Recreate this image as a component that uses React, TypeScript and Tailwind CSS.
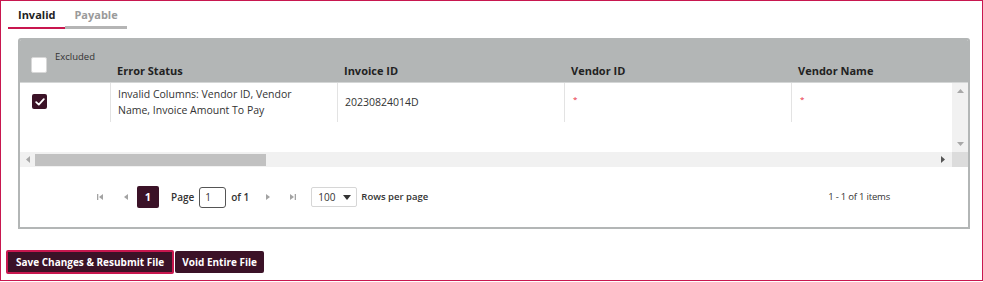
import React from "react";

const maroon = "bg-[#3b1227]";

function Tri({ dir, bar }: { dir: "l" | "r"; bar?: boolean }) {
  // small pager arrow, optionally with a bar (first/last)
  return (
    <svg width="9" height="8" viewBox="0 0 9 8" className="text-[#a3a3a3]">
      {dir === "l" ? (
        <>
          {bar && <rect x="1" y="1" width="1.3" height="6" fill="currentColor" />}
          <path d="M7 1 L3 4 L7 7 Z" fill="currentColor" />
        </>
      ) : (
        <>
          <path d="M2 1 L6 4 L2 7 Z" fill="currentColor" />
          {bar && <rect x="6.7" y="1" width="1.3" height="6" fill="currentColor" />}
        </>
      )}
    </svg>
  );
}

function Check() {
  return (
    <div className={`w-[15px] h-[15px] rounded-[2px] ${maroon} flex items-center justify-center`}>
      <svg width="10" height="8" viewBox="0 0 10 8">
        <path d="M1.2 4.2 L3.8 6.6 L8.8 1.2" stroke="white" strokeWidth="1.8" fill="none" strokeLinecap="round" strokeLinejoin="round" />
      </svg>
    </div>
  );
}

export default function App() {
  const cols = ["Error Status", "Invoice ID", "Vendor ID", "Vendor Name"];

  return (
    <div
      className="w-[983px] h-[281px] border border-[#c8174f] bg-white text-[#222] overflow-hidden"
      style={{ fontFamily: '"Open Sans", "Liberation Sans", sans-serif' }}
    >
      {/* Tabs */}
      <div className="flex ml-[7px] mt-[3px] h-[25px]">
        <div className="px-[10px] pt-[3px] border-b-2 border-[#c8174f] text-[11px] font-bold text-[#222]">Invalid</div>
        <div className="px-[9px] pt-[3px] border-b-[3px] border-[#b5b5b5] text-[11px] font-bold text-[#9a9a9a]">Payable</div>
      </div>

      {/* Grid */}
      <div className="ml-[17px] mt-[9px] w-[952px] h-[191px] border-2 border-[#b3b6b6] rounded-t-[3px] flex flex-col overflow-hidden">
        {/* header */}
        <div className="h-[43px] bg-[#b3b6b6] flex shrink-0 border-b border-[#d4d6d6]">
          <div className="w-[90px] shrink-0 relative">
            <div className="absolute left-[11px] top-[17px] w-[16px] h-[16px] bg-white border border-[#d8d8d8] rounded-[2px]" />
            <div className="absolute left-[35px] top-[10px] text-[9.5px] text-[#333]">Excluded</div>
          </div>
          {cols.map((c) => (
            <div key={c} className="w-[227px] shrink-0 flex items-end pl-[7px] pb-[3px] text-[11px] font-bold text-[#222]">
              {c}
            </div>
          ))}
        </div>

        {/* body */}
        <div className="flex h-[69px] shrink-0">
          <div className="flex-1 overflow-hidden">
            <div className="flex h-[39px]">
              <div className="w-[90px] shrink-0 pl-[12px] pt-[11px]">
                <Check />
              </div>
              <div className="w-[227px] shrink-0 border-l border-[#e3e3e3] pl-[7px] pt-[3px] text-[10.5px] leading-[16px] text-[#333]">
                Invalid Columns: Vendor ID, Vendor
                <br />
                Name, Invoice Amount To Pay
              </div>
              <div className="w-[227px] shrink-0 border-l border-[#e3e3e3] pl-[7px] flex items-center text-[10.5px] text-[#333]">
                20230824014D
              </div>
              <div className="w-[227px] shrink-0 border-l border-[#e3e3e3] pl-[8px] pt-[12px] text-[8px] leading-[8px] text-[#e8283a]">*</div>
              <div className="w-[227px] shrink-0 border-l border-[#e3e3e3] pl-[8px] pt-[12px] text-[8px] leading-[8px] text-[#e8283a]">*</div>
            </div>
          </div>
          <div className="w-[16px] shrink-0 bg-[#f1f1f1] flex flex-col items-center justify-between py-[6px]">
            <svg width="7" height="4" viewBox="0 0 7 4"><path d="M0 4 L3.5 0 L7 4 Z" fill="#a8a8a8" /></svg>
            <svg width="7" height="4" viewBox="0 0 7 4"><path d="M0 0 L3.5 4 L7 0 Z" fill="#a8a8a8" /></svg>
          </div>
        </div>

        {/* horizontal scrollbar */}
        <div className="flex h-[15px] shrink-0">
          <div className="flex-1 bg-[#f1f1f1] flex items-center pl-[6px] pr-[7px]">
            <svg width="4" height="7" viewBox="0 0 4 7"><path d="M4 0 L0 3.5 L4 7 Z" fill="#a8a8a8" /></svg>
            <div className="ml-[5px] w-[231px] h-[12px] bg-[#c1c1c1]" />
            <div className="flex-1" />
            <svg width="4" height="7" viewBox="0 0 4 7"><path d="M0 0 L4 3.5 L0 7 Z" fill="#555" /></svg>
          </div>
          <div className="w-[16px] bg-[#dcdcdc]" />
        </div>

        {/* pager */}
        <div className="flex-1 flex items-center text-[10px] text-[#333]">
          <div className="flex items-center ml-[76px]">
            <Tri dir="l" bar />
            <div className="w-[16px]" />
            <Tri dir="l" />
            <div className={`ml-[7px] w-[22px] h-[22px] rounded-[2px] ${maroon} text-white font-bold text-[11px] flex items-center justify-center`}>1</div>
            <span className="ml-[12px] font-semibold">Page</span>
            <div className="ml-[5px] w-[27px] h-[21px] border border-[#555] rounded-[3px] pl-[5px] flex items-center">1</div>
            <span className="ml-[5px] font-semibold">of 1</span>
            <div className="w-[15px]" />
            <Tri dir="r" />
            <div className="w-[15px]" />
            <Tri dir="r" bar />
            <div className="ml-[14px] w-[46px] h-[20px] border border-[#d6d6d6] rounded-[2px] flex items-center justify-between pl-[6px] pr-[5px]">
              <span>100</span>
              <svg width="8" height="5" viewBox="0 0 8 5"><path d="M0 0 L8 0 L4 5 Z" fill="#333" /></svg>
            </div>
            <span className="ml-[4px] font-semibold text-[9.5px]">Rows per page</span>
          </div>
          <div className="ml-auto mr-[78px] text-[9.5px] tracking-[-0.2px]">1 - 1 of 1 items</div>
        </div>
      </div>

      {/* Buttons */}
      <div className="flex items-center mt-[21px] ml-[5px] gap-[1px]">
        <div className="border-2 border-[#c8174f] rounded-[2px]">
          <div className={`${maroon} text-white font-bold text-[10px] h-[20px] px-[8px] flex items-center`}>
            Save Changes &amp; Resubmit File
          </div>
        </div>
        <div className={`${maroon} text-white font-bold text-[10px] h-[22px] px-[7px] rounded-[2px] flex items-center`}>
          Void Entire File
        </div>
      </div>
    </div>
  );
}
